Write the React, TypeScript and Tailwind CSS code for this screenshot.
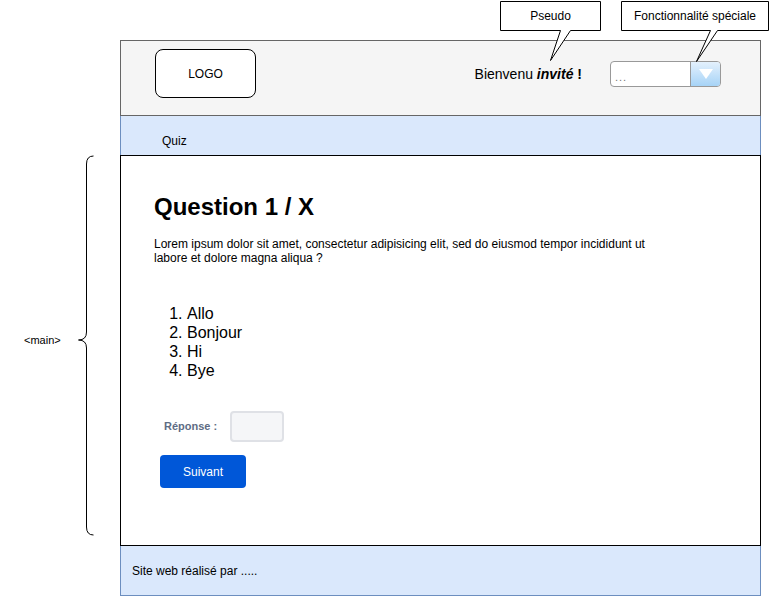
export default function App() {
  return (
    <div className="relative w-[771px] h-[596px] bg-white overflow-hidden font-['Liberation_Sans',Arial,sans-serif] text-black">
      {/* Page wireframe */}
      <div className="ml-[120px] mt-[40px] w-[641px]">
        <header className="h-[76px] border border-[#666666] bg-[#f5f5f5] flex items-start pt-[8px] pl-[34px] pr-[39px]">
          <div className="w-[101px] h-[49px] border border-black rounded-[8px] bg-white flex items-center justify-center text-[12px]">
            LOGO
          </div>
          <div className="ml-auto mt-[12px] flex items-center gap-[28px]">
            <span className="text-[14px]">
              Bienvenu <b className="italic">invité</b> <b>!</b>
            </span>
            <div className="w-[111px] h-[26px] border border-[#999999] rounded-[4px] flex overflow-hidden bg-white">
              <div className="flex-1 flex items-end pl-[4px] pb-[3px] text-[11px] leading-[12px] tracking-[1px] text-[#777777]">...</div>
              <div className="w-[30px] border-l border-[#999999] bg-gradient-to-b from-[#e4f1fd] to-[#a6d3f6] flex items-center justify-center">
                <svg width="14" height="10" viewBox="0 0 14 10">
                  <polygon points="0,0 14,0 7,10" fill="white" />
                </svg>
              </div>
            </div>
          </div>
        </header>

        <nav className="h-[39px] border-x border-[#6c8ebf] bg-[#dae8fc] pl-[41px] pt-[18px] text-[12px] leading-[14px]">
          Quiz
        </nav>

        <main className="h-[391px] border border-black bg-white pl-[33px] pt-[37px]">
          <h1 className="text-[24px] leading-[28px] font-bold">Question 1 / X</h1>
          <p className="mt-[16px] w-[510px] text-[12px] leading-[14px]">
            Lorem ipsum dolor sit amet, consectetur adipisicing elit, sed do eiusmod tempor incididunt ut labore et dolore magna aliqua ?
          </p>
          <ol className="mt-[39px] list-decimal pl-[33px] text-[16px] leading-[19px]">
            <li>Allo</li>
            <li>Bonjour</li>
            <li>Hi</li>
            <li>Bye</li>
          </ol>
          <div className="mt-[31px] ml-[10px] flex items-center gap-[13px]">
            <label className="text-[11px] font-bold text-[#5e6c84]">Réponse :</label>
            <div className="w-[54px] h-[31px] rounded-[4px] border-2 border-[#dfe1e6] bg-[#f5f6f8]" />
          </div>
          <button className="mt-[13px] ml-[6px] w-[86px] h-[33px] rounded-[4px] bg-[#0057d8] text-white text-[12px]">
            Suivant
          </button>
        </main>

        <footer className="h-[50px] border-x border-b border-[#6c8ebf] bg-[#dae8fc] flex items-center pl-[11px] text-[12px]">
          Site web réalisé par .....
        </footer>
      </div>

      {/* Annotations */}
      <svg className="absolute left-0 top-0" width="771" height="596">
        <path d="M500.5,1.5 H600.5 V30.5 H570.5 L550.5,60.5 L560.5,30.5 H500.5 Z" fill="white" stroke="black" />
        <path d="M621.5,1.5 H768.5 V30.5 H717.5 L696.5,61.5 L710.5,30.5 H621.5 Z" fill="white" stroke="black" />
        <path
          d="M93.5,156 Q86.5,156 86.5,164 V332 Q86.5,340 78.5,340 Q86.5,340 86.5,348 V527 Q86.5,535 93.5,535"
          fill="none"
          stroke="black"
        />
      </svg>
      <div className="absolute left-[500px] top-[1px] w-[101px] h-[30px] flex items-center justify-center text-[12px]">
        Pseudo
      </div>
      <div className="absolute left-[621px] top-[1px] w-[148px] h-[30px] flex items-center justify-center text-[12px]">
        Fonctionnalité spéciale
      </div>
      <div className="absolute left-[24px] top-[332px] text-[11px] leading-[16px]">&lt;main&gt;</div>
    </div>
  );
}
